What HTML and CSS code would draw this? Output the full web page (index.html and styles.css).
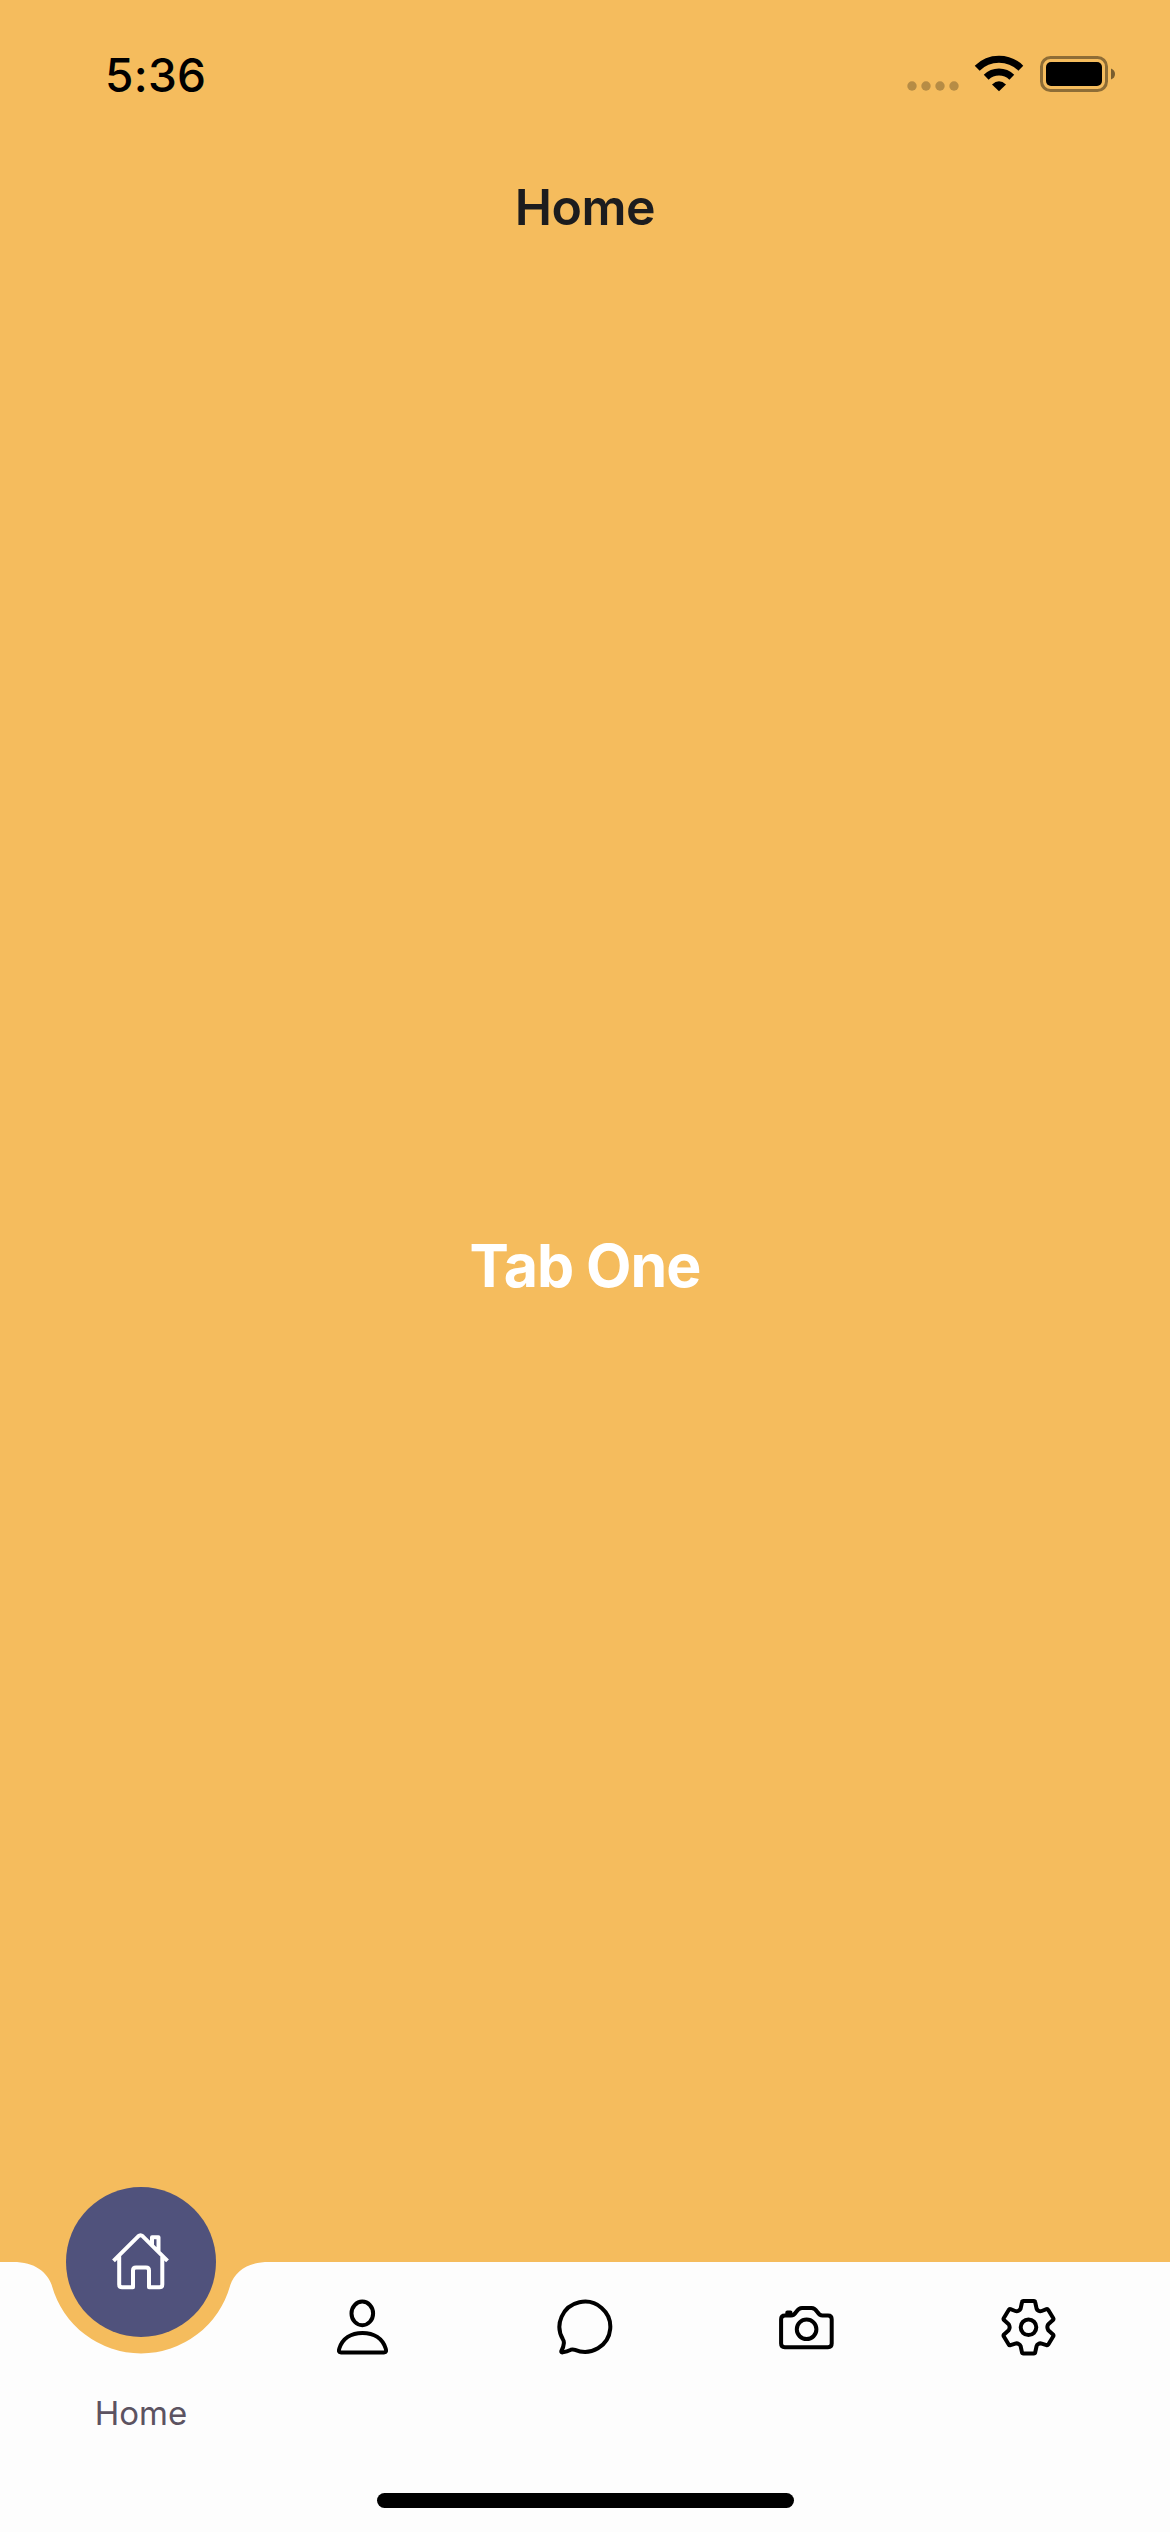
FILE: index.html
```html
<!DOCTYPE html>
<html lang="en">
<head>
<meta charset="utf-8">
<title>Home</title>
<link rel="stylesheet" href="styles.css">
</head>
<body>
<div class="screen">
  <div class="status">
    <span class="time">5:36</span>
    <div class="status-icons">
      <svg class="signal" width="52" height="10" viewBox="0 0 52 10"><circle cx="5" cy="5" r="4.7"/><circle cx="19" cy="5" r="4.7"/><circle cx="33" cy="5" r="4.7"/><circle cx="47" cy="5" r="4.7"/></svg>
      <svg class="wifi" width="50" height="38" viewBox="0 0 50 38">
        <path class="wave" d="M3.2 14.2A31 31 0 0 1 46.8 14.2M12.2 23.2A18.5 18.5 0 0 1 37.8 23.2"/>
        <path d="M18 30.4Q25 24 32 30.4L25 37.2Z"/>
      </svg>
      <svg class="battery" width="76" height="36" viewBox="0 0 76 36">
        <rect class="shell" x="1.5" y="1.5" width="65" height="33" rx="9"/>
        <rect x="6" y="6" width="56" height="24" rx="5"/>
        <path class="nub" d="M71 12.5Q75 14 75 18T71 23.5Z"/>
      </svg>
    </div>
  </div>
  <header class="header"><h1 class="title">Home</h1></header>
  <main class="content"><p class="message">Tab One</p></main>
  <nav class="tabbar">
    <svg class="notch" width="282" height="94" viewBox="0 0 282 94"><path d="M0-1V0H13C35 0 47 10 51.7 23A92.5 92.5 0 0 0 230.3 23C235 10 247 0 269 0H282V-1Z"/></svg>
    <a class="tab active">
      <span class="bubble">
        <svg class="icon" viewBox="0 0 60 60"><path d="M2.5 28.8 27.2 4.3Q29.5 2.2 31.8 4.3L56.5 28.8M41 12.5V5.3H47.5V19M8.2 24V52.5Q8.2 55.3 11 55.3H22V38.5Q22 35.6 25 35.6H35Q38 35.6 38 38.5V55.3H48.5Q51.3 55.3 51.3 52.5V24"/></svg>
      </span>
      <span class="label">Home</span>
    </a>
    <a class="tab">
      <svg class="icon" viewBox="0 0 60 60"><ellipse cx="29.3" cy="15.4" rx="10.8" ry="11.8"/><path d="M8 54.6C5.7 54.6 5.5 53 6.3 50.5C9.5 40.5 18 35 29.5 35S49.5 40.5 52.7 50.5C53.5 53 53.3 54.6 51 54.6Z"/></svg>
    </a>
    <a class="tab">
      <svg class="icon" viewBox="0 0 60 60"><path d="M8 41.5A25.4 25.1 0 1 1 20 51.9Q17.8 51 16 51.7Q12 53.5 7.5 54.4Q5.6 54.5 6.6 52.4Q8.6 49 8.9 45Q9 43 8 41.5Z"/></svg>
    </a>
    <a class="tab">
      <svg class="icon" viewBox="0 0 60 60"><path d="M8 17.5H14C20 17.5 18.5 10 25 10H34.5C41 10 39.5 17.5 45.5 17.5H51Q54.7 17.5 54.7 21.2V45.5Q54.7 49.2 51 49.2H7.8Q4.1 49.2 4.1 45.5V21.2Q4.1 17.5 8 17.5Z"/><circle cx="29.6" cy="31.3" r="9.8"/><path d="M10.3 16V14.5H13.5V16"/></svg>
    </a>
    <a class="tab">
      <svg class="icon" viewBox="0 0 60 60"><path d="M24.5 3H34.7Q36 3 36.2 4.2L37.6 10.6Q38 12 39.3 12.6Q41 13.7 42.7 13L47.5 11.2Q48.6 10.9 49.3 12L54.3 20.3Q54.8 21.3 54 22.1L49.3 26.2Q47.4 28.8 49.3 32.2L54 36.4Q54.8 37.3 54.3 38.3L49.3 46.5Q48.6 47.6 47.5 47.2L42.7 45.6Q41 45 39.3 46Q38 46.7 37.6 48L36.2 54.4Q36 55.5 34.7 55.5H24.5Q23.2 55.5 23 54.4L21.6 48Q21 46.7 19.7 46Q18 45 16.3 45.6L11.5 47.2Q10.3 47.6 9.7 46.5L4.7 38.3Q4.2 37.3 5 36.4L9.7 32.2Q11.6 29.3 9.7 26.2L5 22.1Q4.2 21.3 4.7 20.3L9.7 12Q10.3 10.9 11.5 11.2L16.3 13Q18 13.7 19.7 12.6Q21 12 21.6 10.6L23 4.2Q23.2 3 24.5 3Z"/><circle cx="29.5" cy="29.3" r="7.8"/></svg>
    </a>
    <span class="home-indicator"></span>
  </nav>
</div>
</body>
</html>
```

FILE: styles.css
```css
* { box-sizing: border-box; }
body {
  margin: 0;
  font-family: Inter, "Liberation Sans", sans-serif;
}
.screen {
  width: 1170px;
  height: 2532px;
  display: flex;
  flex-direction: column;
  background: #f5bc5d;
}
.status {
  height: 141px;
  flex: none;
  display: flex;
  justify-content: space-between;
  align-items: flex-start;
  padding: 54px 54px 0 105px;
}
.time {
  font-size: 46px;
  line-height: 42px;
  font-weight: 550;
  letter-spacing: .3px;
  color: #000;
}
.status-icons { display: flex; align-items: flex-start; }
.signal { margin: 27px 15px 0 0; opacity: .25; }
.wifi { margin-right: 16px; }
.wave { fill: none; stroke: #000; stroke-width: 7; }
.battery { margin-top: 2px; }
.shell { fill: none; stroke: #000; stroke-width: 3; opacity: .42; }
.nub { opacity: .5; }
.header {
  height: 132px;
  flex: none;
  display: flex;
  align-items: center;
  justify-content: center;
}
.title {
  margin: 0;
  font-size: 50px;
  line-height: 60px;
  font-weight: 570;
  letter-spacing: -.5px;
  color: #1c1c1e;
}
.content {
  flex: 1;
  display: flex;
  align-items: center;
  justify-content: center;
  padding-bottom: 3px;
}
.message {
  margin: 0;
  font-size: 59px;
  line-height: 72px;
  font-weight: 700;
  letter-spacing: -1px;
  color: #fff;
}
.tabbar {
  position: relative;
  flex: none;
  height: 270px;
  display: grid;
  grid-template-columns: repeat(5, 222px);
  padding: 0 30px;
  background: #fdfdfd;
}
.notch {
  position: absolute;
  top: 0;
  left: 0;
  fill: #f5bc5d;
  overflow: visible;
}
.tab {
  position: relative;
  display: flex;
  flex-direction: column;
  align-items: center;
  padding-top: 36px;
}
.icon {
  width: 60px;
  height: 60px;
  fill: none;
  stroke: #000;
  stroke-width: 4;
  stroke-linejoin: round;
}
.bubble {
  position: absolute;
  top: -75px;
  width: 150px;
  height: 150px;
  display: flex;
  align-items: center;
  justify-content: center;
  border-radius: 50%;
  background: #50527c;
}
.bubble .icon { stroke: #fff; }
.label {
  margin-top: 95px;
  font-size: 33px;
  line-height: 40px;
  color: #5c5361;
}
.home-indicator {
  position: absolute;
  left: 377px;
  bottom: 24px;
  width: 417px;
  height: 15px;
  border-radius: 8px;
  background: #000;
}
```
